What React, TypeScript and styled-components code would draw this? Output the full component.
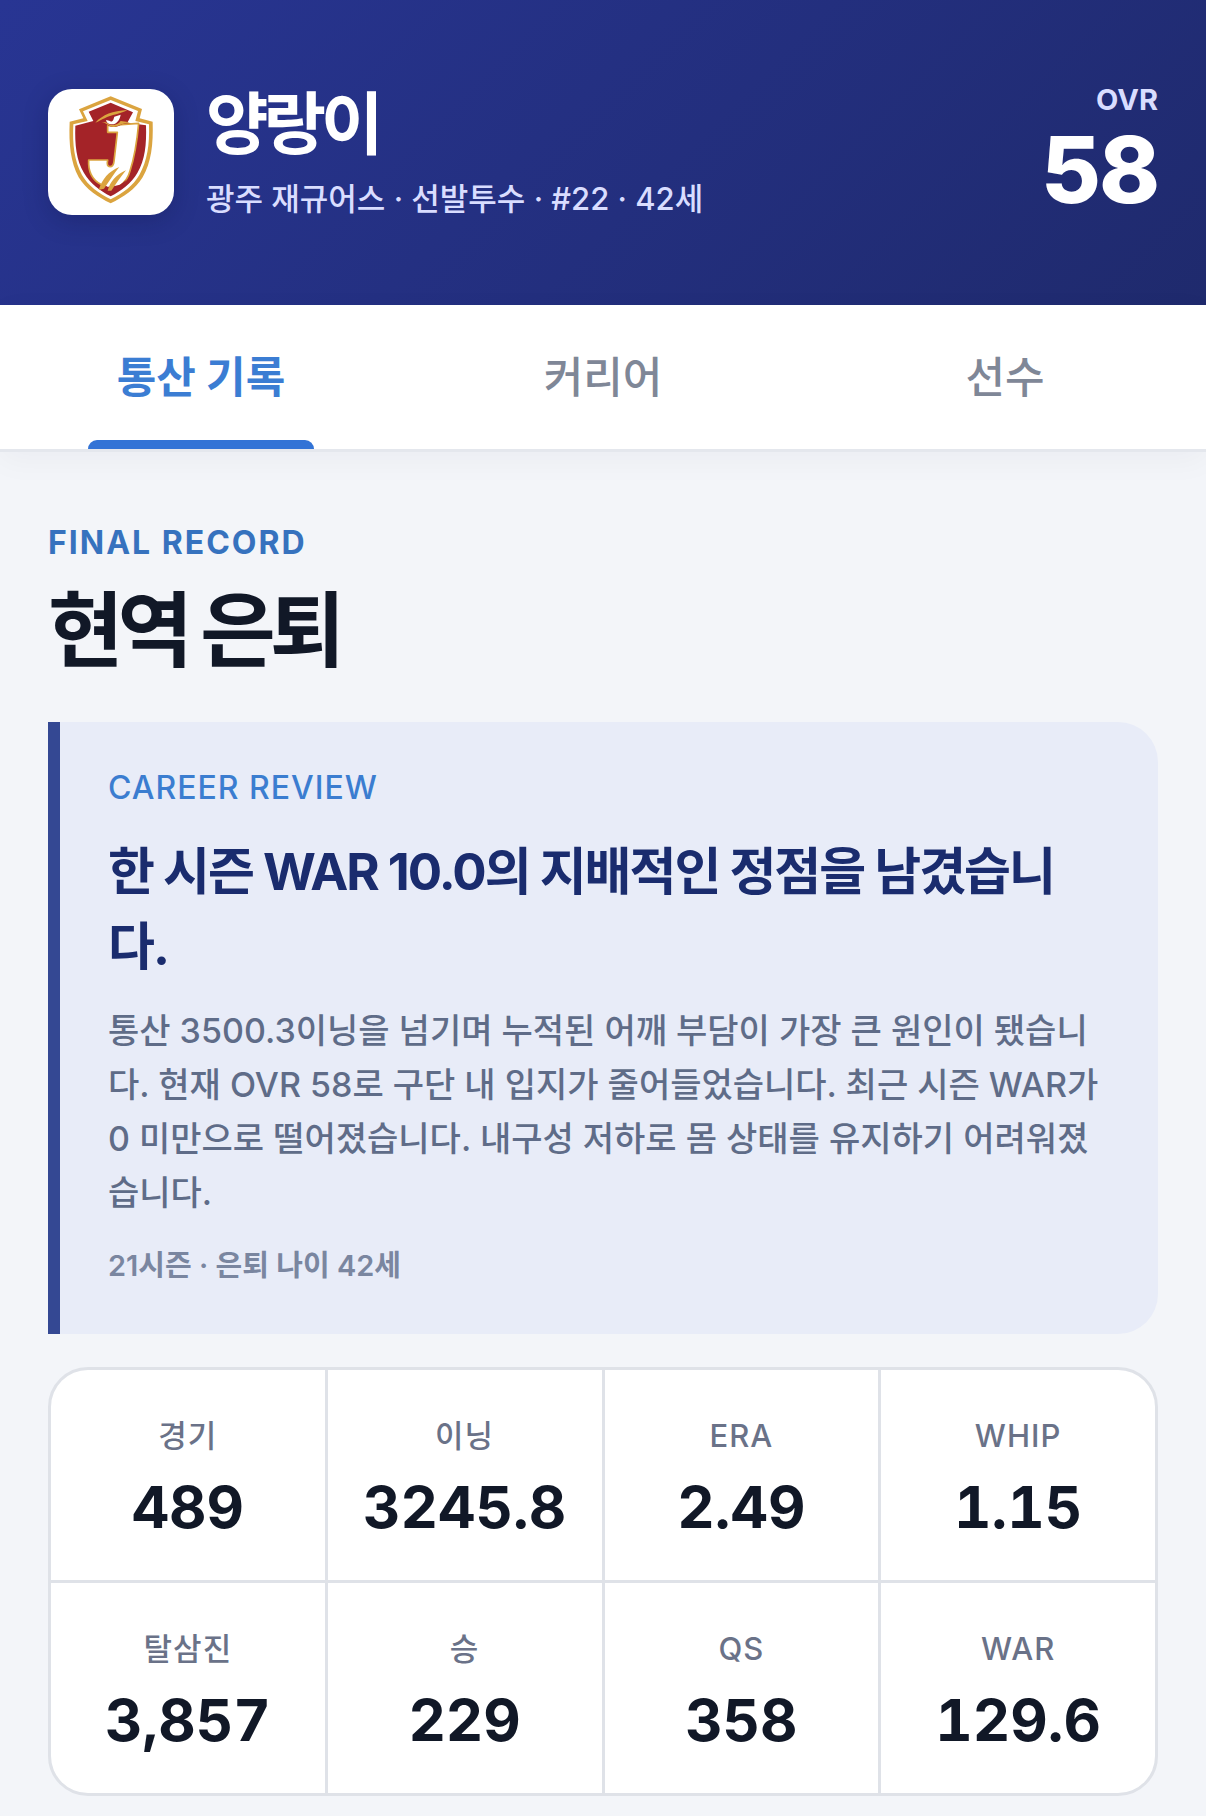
import React, { useState } from "react";
import styled, { createGlobalStyle } from "styled-components";

const GlobalStyle = createGlobalStyle`
  * { box-sizing: border-box; }
  body {
    margin: 0;
    background: #f3f5f9;
    font-family: Inter, "Noto Sans CJK KR", sans-serif;
    color: #111827;
  }
  h1, h2, h3, p, dl, dt, dd { margin: 0; }
`;

const Header = styled.header`
  display: flex;
  align-items: center;
  gap: 32px;
  padding: 82px 48px 83px;
  background: linear-gradient(135deg, #283593 0%, #1f2a6d 100%);
`;

const LogoTile = styled.div`
  flex: none;
  width: 126px;
  height: 126px;
  border-radius: 24px;
  background: #fff;
  box-shadow: 0 6px 24px rgba(10, 16, 60, 0.25);

  svg { display: block; width: 100%; height: 100%; }
`;

const Identity = styled.div`
  flex: 1;
  min-width: 0;
  display: flex;
  flex-direction: column;
  gap: 14px;
`;

const PlayerName = styled.h1`
  font-size: 68px;
  line-height: 80px;
  font-weight: 700;
  letter-spacing: -5px;
  color: #fff;
`;

const PlayerMeta = styled.p`
  font-size: 31px;
  line-height: 42px;
  font-weight: 500;
  color: #d9ddff;
`;

const Rating = styled.div`
  display: flex;
  flex-direction: column;
  align-items: flex-end;
  gap: 8px;
  padding-bottom: 8px;
`;

const RatingLabel = styled.span`
  font-size: 29px;
  line-height: 36px;
  font-weight: 700;
  color: #d9ddff;
`;

const RatingValue = styled.strong`
  font-size: 92px;
  line-height: 88px;
  font-weight: 800;
  letter-spacing: -2px;
  color: #fff;
`;

const Tabs = styled.nav`
  display: grid;
  grid-template-columns: repeat(3, 1fr);
  background: #fff;
  border-bottom: 3px solid #e4e7ed;
  box-shadow: 0 8px 30px rgba(17, 24, 39, 0.04);
`;

const Tab = styled.button<{ $active: boolean }>`
  position: relative;
  height: 144px;
  padding: 0 0 6px;
  border: 0;
  background: none;
  font: inherit;
  font-size: 43px;
  font-weight: ${(p) => (p.$active ? 700 : 500)};
  color: ${(p) => (p.$active ? "#3b7dd3" : "#7f8797")};
  cursor: pointer;

  &::after {
    content: "";
    display: ${(p) => (p.$active ? "block" : "none")};
    position: absolute;
    left: 22%;
    right: 22%;
    bottom: 0;
    height: 9px;
    border-radius: 9px 9px 0 0;
    background: #3273d6;
  }
`;

const Main = styled.main`
  padding: 71px 48px 20px;
`;

const Eyebrow = styled.p`
  font-size: 32px;
  line-height: 40px;
  font-weight: 700;
  letter-spacing: 2px;
  color: #3672be;
`;

const PageTitle = styled.h2`
  margin-top: 19px;
  font-size: 82px;
  line-height: 98px;
  font-weight: 700;
  letter-spacing: -6px;
`;

const Review = styled.section`
  margin-top: 42px;
  padding: 46px 48px 48px;
  border-left: 12px solid #344893;
  border-radius: 0 40px 40px 0;
  background: #e8ecf8;
`;

const ReviewLabel = styled.p`
  font-size: 32px;
  line-height: 40px;
  font-weight: 500;
  letter-spacing: 1px;
  color: #3b7dd0;
`;

const ReviewTitle = styled.h3`
  margin-top: 26px;
  font-size: 51px;
  line-height: 75px;
  font-weight: 700;
  letter-spacing: -2px;
  color: #1a2c6e;
`;

const ReviewBody = styled.p`
  margin-top: 20px;
  font-size: 34px;
  line-height: 54px;
  font-weight: 500;
  color: #5f6c88;
`;

const ReviewNote = styled.p`
  margin-top: 26px;
  font-size: 29px;
  line-height: 40px;
  font-weight: 600;
  color: #7a86a0;
`;

const StatGrid = styled.dl`
  display: grid;
  grid-template-columns: repeat(4, 1fr);
  gap: 3px;
  margin-top: 33px;
  border: 3px solid #dfe2e8;
  border-radius: 40px;
  background: #dfe2e8;
  overflow: hidden;
`;

const Stat = styled.div`
  display: flex;
  flex-direction: column;
  align-items: center;
  gap: 19px;
  padding: 46px 0 41px;
  background: #fff;
`;

const StatLabel = styled.dt`
  font-size: 31px;
  line-height: 40px;
  font-weight: 500;
  letter-spacing: 1px;
  color: #6a7288;
`;

const StatValue = styled.dd`
  font-size: 58px;
  line-height: 64px;
  font-weight: 700;
  font-variant-numeric: tabular-nums;
`;

const SHIELD =
  "M212 79 L306 117 L299 145 L338 155 C340 225 334 275 308 322 C286 358 250 382 212 400 C174 382 138 358 116 322 C92 275 86 225 89 155 L130 145 L117 118 Z";

const TeamLogo = () => (
  <svg viewBox="24 57 378 378" role="img" aria-label="광주 재규어스">
    <path d={SHIELD} fill="#dba43f" />
    <path
      d="M212 90 L294 123 L286 153 L327 163 C329 226 322 272 298 315 C280 347 248 370 212 388 C176 370 144 347 126 315 C103 272 97 226 100 163 L143 153 L129 124 Z"
      fill="#fff"
    />
    <path
      d="M212 98 L279 127 L262 158 L318 166 C320 224 315 270 292 309 C274 340 244 362 212 379 C180 362 150 340 132 309 C109 270 104 224 106 167 L160 153 L146 125 Z"
      fill="#a42328"
    />
    <path
      d="M203 167 L296 160 C291 215 284 260 270 303 C264 326 252 340 238 348 L212 360 L182 343 C158 330 144 306 146 270 L203 270 C200 284 203 290 210 290 C218 290 221 284 222 274 L232 187 L203 187 Z"
      fill="#fff"
      stroke="#dba43f"
      strokeWidth="5"
      strokeLinejoin="round"
    />
    <path d="M182 352 L190 341 L202 350 L214 350 L240 344 L262 328 L246 352 L212 376 Z" fill="#a42328" />
    <path d="M176 360 C186 328 206 304 238 291 C222 310 208 334 192 356 Z" fill="#dba43f" />
    <path d="M203 362 C210 336 228 314 258 301 C242 320 228 342 214 362 Z" fill="#dba43f" />
    <path d="M182 146 L262 130 L262 156 C244 162 234 172 220 171 C206 170 202 162 182 158 Z" fill="#a42328" />
    <path d="M166 158 C188 134 218 122 262 120 C246 131 212 134 194 145 C184 149 176 155 166 158 Z" fill="#dba43f" />
    <path
      d="M184 157 C200 158 206 171 221 171 C236 170 246 160 270 157 L242 153 C232 168 208 168 198 157 Z"
      fill="#dba43f"
    />
    <path d="M223 140 L242 134 C239 150 230 163 215 163 C206 163 199 158 198 150 L208 152 C212 156 218 155 220 149 Z" fill="#fff" />
  </svg>
);

const TABS = ["통산 기록", "커리어", "선수"];

const STATS: [string, string][] = [
  ["경기", "489"],
  ["이닝", "3245.8"],
  ["ERA", "2.49"],
  ["WHIP", "1.15"],
  ["탈삼진", "3,857"],
  ["승", "229"],
  ["QS", "358"],
  ["WAR", "129.6"],
];

export default function App() {
  const [active, setActive] = useState(0);

  return (
    <>
      <GlobalStyle />
      <Header>
        <LogoTile>
          <TeamLogo />
        </LogoTile>
        <Identity>
          <PlayerName>양랑이</PlayerName>
          <PlayerMeta>광주 재규어스 · 선발투수 · #22 · 42세</PlayerMeta>
        </Identity>
        <Rating>
          <RatingLabel>OVR</RatingLabel>
          <RatingValue>58</RatingValue>
        </Rating>
      </Header>
      <Tabs>
        {TABS.map((label, i) => (
          <Tab key={label} type="button" $active={i === active} onClick={() => setActive(i)}>
            {label}
          </Tab>
        ))}
      </Tabs>
      <Main>
        <Eyebrow>FINAL RECORD</Eyebrow>
        <PageTitle>현역 은퇴</PageTitle>
        <Review>
          <ReviewLabel>CAREER REVIEW</ReviewLabel>
          <ReviewTitle>한 시즌 WAR 10.0의 지배적인 정점을 남겼습니다.</ReviewTitle>
          <ReviewBody>
            통산 3500.3이닝을 넘기며 누적된 어깨 부담이 가장 큰 원인이 됐습니다. 현재 OVR 58로 구단 내
            입지가 줄어들었습니다. 최근 시즌 WAR가 0 미만으로 떨어졌습니다. 내구성 저하로 몸 상태를
            유지하기 어려워졌습니다.
          </ReviewBody>
          <ReviewNote>21시즌 · 은퇴 나이 42세</ReviewNote>
        </Review>
        <StatGrid>
          {STATS.map(([label, value]) => (
            <Stat key={label}>
              <StatLabel>{label}</StatLabel>
              <StatValue>{value}</StatValue>
            </Stat>
          ))}
        </StatGrid>
      </Main>
    </>
  );
}
